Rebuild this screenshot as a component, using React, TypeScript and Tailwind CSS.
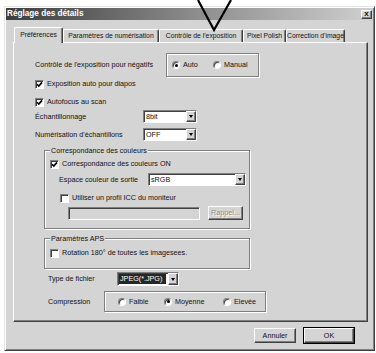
import React from 'react';

const raised =
  'bg-[#d4d4d4] border border-t-white border-l-white border-r-[#404040] border-b-[#404040] shadow-[inset_-1px_-1px_0_#808080]';
const sunken =
  'border border-t-[#808080] border-l-[#808080] border-r-white border-b-white shadow-[inset_1px_1px_0_#404040]';
const etched = 'border border-[#808080] shadow-[inset_1px_1px_0_#fff,1px_1px_0_#fff]';

function Check({ on }: { on?: boolean }) {
  return (
    <span className={`w-[9px] h-[9px] bg-white ${sunken} flex items-center justify-center shrink-0`}>
      {on && (
        <svg width="7" height="7" viewBox="0 0 7 7">
          <path d="M1 3.2 L2.8 5 L6 1.4" stroke="#000" strokeWidth="1.6" fill="none" />
        </svg>
      )}
    </span>
  );
}

function Radio({ on }: { on?: boolean }) {
  return (
    <span className={`w-[8px] h-[8px] rounded-full bg-white ${sunken} flex items-center justify-center shrink-0`}>
      {on && <span className="w-[3px] h-[3px] rounded-full bg-black" />}
    </span>
  );
}

function Arrow() {
  return (
    <span className={`${raised} w-[10px] h-full flex items-center justify-center shrink-0`}>
      <span className="w-0 h-0 border-l-[2.5px] border-r-[2.5px] border-t-[3px] border-l-transparent border-r-transparent border-t-black" />
    </span>
  );
}

function Combo({ value, className, selected }: { value: string; className: string; selected?: boolean }) {
  return (
    <div className={`${sunken} bg-white flex items-center ${className}`}>
      {selected ? (
        <span className="flex-1 h-full flex items-center py-[1px] pl-[1px] pr-[2px]">
          <span className="bg-[#262626] text-white h-full flex items-center px-[1px] w-full">{value}</span>
        </span>
      ) : (
        <span className="flex-1 pl-[2px]">{value}</span>
      )}
      <Arrow />
    </div>
  );
}

function CheckRow({ on, label, className }: { on?: boolean; label: string; className: string }) {
  return (
    <div className={`flex items-center gap-[3px] h-[12px] ${className}`}>
      <Check on={on} />
      <span>{label}</span>
    </div>
  );
}

const tabs = [
  { label: 'Préférences', w: 'w-[49px]', active: true },
  { label: 'Paramètres de numérisation', w: 'w-[96px]' },
  { label: "Contrôle de l'exposition", w: 'w-[84px]' },
  { label: 'Pixel Polish', w: 'w-[43px]' },
  { label: "Correction d'image", w: 'w-[59px]' },
];

export default function App() {
  return (
    <div className="relative w-[376px] h-[353px] bg-white overflow-hidden pt-[6px] pl-[4px] font-['Liberation_Sans',Arial,sans-serif] text-[7.2px] leading-none text-[#111] whitespace-nowrap">
      {/* fleche */}
      <svg className="absolute left-0 top-0 z-20" width="376" height="40">
        <polyline points="198,0 214,30 231,0" stroke="#000" strokeWidth="2.2" fill="none" />
      </svg>

      <div className="w-[371px] h-[345px] p-[1px] bg-[#d4d4d4] border border-t-[#e4e4e4] border-l-[#e4e4e4] border-r-[#404040] border-b-[#404040] shadow-[inset_1px_1px_0_#fff,inset_-1px_-1px_0_#808080]">
        {/* titre */}
        <div className="h-[12px] bg-gradient-to-r from-[#3e3e3e] via-[#8a8a8a] to-[#d0d0d0] flex items-center justify-between pl-[1px] pr-[1px]">
          <span className="text-white font-bold text-[8.2px]">Réglage des détails</span>
          <span className={`${raised} w-[11px] h-[9px] flex items-center justify-center font-bold text-[8px]`}>x</span>
        </div>

        {/* onglets */}
        <div className="flex items-end h-[15px] ml-[8px] mt-[7px] text-[6.8px]">
          {tabs.map((t) => (
            <div
              key={t.label}
              className={`${t.w} flex items-center justify-center bg-[#d4d4d4] rounded-t-[2px] border-t border-l border-r border-t-white border-l-white border-r-[#404040] shadow-[inset_-1px_0_0_#808080] ${
                t.active ? 'h-[16px] -mb-px relative z-10' : 'h-[13px]'
              }`}
            >
              {t.label}
            </div>
          ))}
        </div>

        {/* panneau */}
        <div className="w-[355px] h-[280px] ml-[7px] border border-t-white border-l-white border-r-[#404040] border-b-[#404040] shadow-[inset_-1px_-1px_0_#808080]">
          <div className="flex items-center mt-[10px] ml-[21px]">
            <span className="w-[131px]">Contrôle de l'exposition pour négatifs</span>
            <div className={`${etched} w-[93px] h-[24px] flex items-center pl-[5px]`}>
              <div className="w-[41px] flex items-center gap-[3px]">
                <Radio on />
                <span>Auto</span>
              </div>
              <div className="flex items-center gap-[3px]">
                <Radio />
                <span>Manual</span>
              </div>
            </div>
          </div>

          <CheckRow on label="Exposition auto pour diapos" className="mt-[1px] ml-[21px]" />
          <CheckRow on label="Autofocus au scan" className="mt-[6px] ml-[21px]" />

          <div className="flex items-center mt-[2px] ml-[21px]">
            <span className="w-[108px]">Échantillonnage</span>
            <Combo value="8bit" className="w-[54px] h-[13px]" />
          </div>
          <div className="flex items-center mt-[5px] ml-[21px]">
            <span className="w-[108px]">Numérisation d'échantillons</span>
            <Combo value="OFF" className="w-[54px] h-[13px]" />
          </div>

          <fieldset className={`${etched} w-[206px] h-[83px] ml-[30px] mt-[5px]`}>
            <legend className="ml-[5px] px-[1px] bg-[#d4d4d4] leading-[9px]">Correspondance des couleurs</legend>
            <CheckRow on label="Correspondance des couleurs ON" className="mt-[3px] ml-[5px]" />
            <div className="flex items-center mt-[3px] ml-[14px]">
              <span className="w-[89px]">Espace couleur de sortie</span>
              <Combo value="sRGB" className="w-[98px] h-[13px]" />
            </div>
            <CheckRow label="Utiliser un profil ICC du moniteur" className="mt-[6px] ml-[15px]" />
            <div className="flex items-center mt-[2px] ml-[23px]">
              <div className={`${sunken} w-[132px] h-[13px]`} />
              <div className={`${raised} w-[35px] h-[14px] ml-[8px] flex items-center justify-center text-[#8a8a8a] [text-shadow:1px_1px_0_#fff]`}>
                Rappel...
              </div>
            </div>
          </fieldset>

          <fieldset className={`${etched} w-[206px] h-[35px] ml-[30px] mt-[5px]`}>
            <legend className="ml-[5px] px-[1px] bg-[#d4d4d4] leading-[9px]">Paramètres APS</legend>
            <CheckRow label="Rotation 180° de toutes les imagesees." className="mt-[4px] ml-[5px]" />
          </fieldset>

          <div className="flex items-center mt-[3px] ml-[34px]">
            <span className="w-[69px]">Type de fichier</span>
            <Combo value="JPEG(*.JPG)" selected className="w-[62px] h-[14px]" />
          </div>

          <div className="flex items-center mt-[5px] ml-[34px]">
            <span className="w-[56px]">Compression</span>
            <div className={`${etched} w-[162px] h-[21px] flex items-center pl-[13px]`}>
              <div className="w-[46px] flex items-center gap-[3px]">
                <Radio />
                <span>Faible</span>
              </div>
              <div className="w-[59px] flex items-center gap-[3px]">
                <Radio on />
                <span>Moyenne</span>
              </div>
              <div className="flex items-center gap-[3px]">
                <Radio />
                <span>Elevée</span>
              </div>
            </div>
          </div>
        </div>

        {/* boutons */}
        <div className="flex items-center justify-end gap-[7px] mt-[5px] pr-[18px]">
          <div className={`${raised} w-[42px] h-[15px] flex items-center justify-center`}>Annuler</div>
          <div className="border border-black">
            <div className={`${raised} w-[50px] h-[15px] flex items-center justify-center`}>OK</div>
          </div>
        </div>
      </div>
    </div>
  );
}
